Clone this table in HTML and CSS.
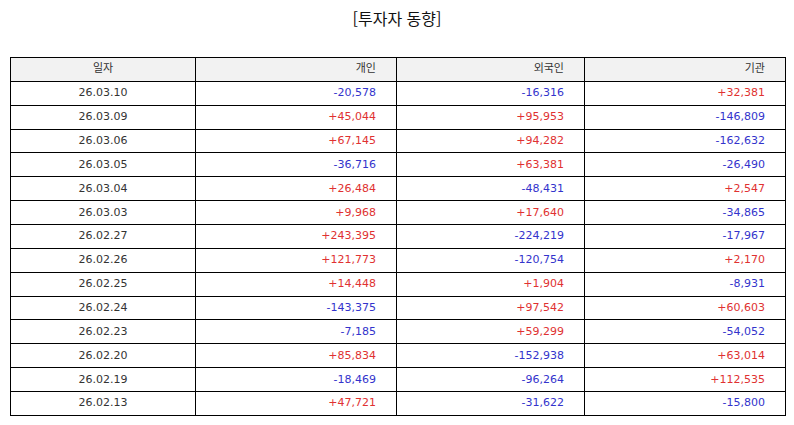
FILE: index.html
```html
<!DOCTYPE html>
<html lang="ko">
<head>
<meta charset="utf-8">
<link rel="stylesheet" href="styles.css">
</head>
<body>
<h1 class="title">[투자자 동향]</h1>
<table class="flow">
<colgroup>
<col class="c-date"><col class="c-ind"><col class="c-for"><col class="c-inst">
</colgroup>
<thead>
<tr><th class="center">일자</th><th>개인</th><th>외국인</th><th>기관</th></tr>
</thead>
<tbody>
<tr><td class="center">26.03.10</td><td class="dn">-20,578</td><td class="dn">-16,316</td><td class="up">+32,381</td></tr>
<tr><td class="center">26.03.09</td><td class="up">+45,044</td><td class="up">+95,953</td><td class="dn">-146,809</td></tr>
<tr><td class="center">26.03.06</td><td class="up">+67,145</td><td class="up">+94,282</td><td class="dn">-162,632</td></tr>
<tr><td class="center">26.03.05</td><td class="dn">-36,716</td><td class="up">+63,381</td><td class="dn">-26,490</td></tr>
<tr><td class="center">26.03.04</td><td class="up">+26,484</td><td class="dn">-48,431</td><td class="up">+2,547</td></tr>
<tr><td class="center">26.03.03</td><td class="up">+9,968</td><td class="up">+17,640</td><td class="dn">-34,865</td></tr>
<tr><td class="center">26.02.27</td><td class="up">+243,395</td><td class="dn">-224,219</td><td class="dn">-17,967</td></tr>
<tr><td class="center">26.02.26</td><td class="up">+121,773</td><td class="dn">-120,754</td><td class="up">+2,170</td></tr>
<tr><td class="center">26.02.25</td><td class="up">+14,448</td><td class="up">+1,904</td><td class="dn">-8,931</td></tr>
<tr><td class="center">26.02.24</td><td class="dn">-143,375</td><td class="up">+97,542</td><td class="up">+60,603</td></tr>
<tr><td class="center">26.02.23</td><td class="dn">-7,185</td><td class="up">+59,299</td><td class="dn">-54,052</td></tr>
<tr><td class="center">26.02.20</td><td class="up">+85,834</td><td class="dn">-152,938</td><td class="up">+63,014</td></tr>
<tr><td class="center">26.02.19</td><td class="dn">-18,469</td><td class="dn">-96,264</td><td class="up">+112,535</td></tr>
<tr><td class="center">26.02.13</td><td class="up">+47,721</td><td class="dn">-31,622</td><td class="dn">-15,800</td></tr>
</tbody>
</table>
</body>
</html>
```
FILE: styles.css
```css
html, body {
  margin: 0;
  padding: 0;
  background: #ffffff;
}
body {
  font-family: "Noto Sans CJK KR", "Noto Sans", sans-serif;
  color: #222222;
}
.title {
  margin: 0;
  height: 57px;
  padding-top: 6px;
  box-sizing: border-box;
  text-align: center;
  font-size: 16px;
  font-weight: normal;
  line-height: 24px;
  color: #111111;
}
.flow {
  margin-left: 10px;
  width: 775px;
  border-collapse: collapse;
  table-layout: fixed;
  font-family: "DejaVu Sans", "Noto Sans CJK KR", sans-serif;
  font-size: 11px;
}
.c-date { width: 185px; }
.c-ind { width: 201px; }
.c-for { width: 188px; }
.c-inst { width: 201px; }
.flow th, .flow td {
  border: 1px solid #000000;
  height: 22.87px;
  padding: 0 20px 0 4px;
  text-align: right;
  font-weight: normal;
  line-height: 22px;
  color: #333333;
}
.flow th {
  background: #f2f2f2;
}
.flow .center {
  text-align: center;
  padding: 0;
}
.flow .up { color: #e03131; }
.flow .dn { color: #3333cc; }
```
